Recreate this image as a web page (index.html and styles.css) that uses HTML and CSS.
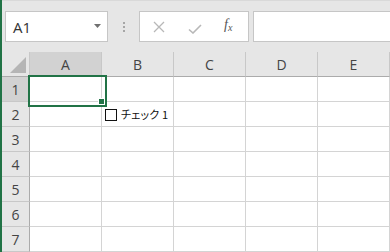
FILE: index.html
```html
<!DOCTYPE html>
<html lang="ja">
<head>
<meta charset="utf-8">
<link rel="stylesheet" href="styles.css">
</head>
<body>
<div class="app">
  <div class="toolbar">
    <div class="namebox">
      <span class="name">A1</span>
      <svg class="drop" width="7" height="4" viewBox="0 0 7 4"><path d="M0 0H7L3.5 4Z" fill="#707070"/></svg>
    </div>
    <div class="grip"><i></i><i></i><i></i></div>
    <div class="fbtns">
      <svg class="ico" width="12" height="12" viewBox="0 0 12 12"><path d="M1 1L11 11M11 1L1 11" stroke="#b8b8b8" stroke-width="1.3" fill="none"/></svg>
      <svg class="ico" width="14" height="10" viewBox="0 0 14 10"><path d="M1 5.5L5 9L13 1" stroke="#b8b8b8" stroke-width="1.6" fill="none"/></svg>
      <span class="fx">f<sub>x</sub></span>
    </div>
    <div class="finput"></div>
  </div>
  <div class="sheet">
    <div class="corner"><svg width="18" height="18" viewBox="0 0 18 18"><path d="M17 1V17H1Z" fill="#b5b5b5"/></svg></div>
    <div class="ch sel">A</div>
    <div class="ch">B</div>
    <div class="ch">C</div>
    <div class="ch">D</div>
    <div class="ch">E</div>

    <div class="rh sel">1</div>
    <div class="c a1"><span class="handle"></span></div><div class="c"></div><div class="c"></div><div class="c"></div><div class="c"></div>

    <div class="rh">2</div>
    <div class="c"></div><div class="c chk"><span class="box"></span><span class="lbl">チェック 1</span></div><div class="c"></div><div class="c"></div><div class="c"></div>

    <div class="rh">3</div>
    <div class="c"></div><div class="c"></div><div class="c"></div><div class="c"></div><div class="c"></div>

    <div class="rh">4</div>
    <div class="c"></div><div class="c"></div><div class="c"></div><div class="c"></div><div class="c"></div>

    <div class="rh">5</div>
    <div class="c"></div><div class="c"></div><div class="c"></div><div class="c"></div><div class="c"></div>

    <div class="rh">6</div>
    <div class="c"></div><div class="c"></div><div class="c"></div><div class="c"></div><div class="c"></div>

    <div class="rh">7</div>
    <div class="c"></div><div class="c"></div><div class="c"></div><div class="c"></div><div class="c"></div>
  </div>
</div>
</body>
</html>
```
FILE: styles.css
```css
* { box-sizing: border-box; }
html, body { margin: 0; padding: 0; }
body {
  width: 390px;
  height: 252px;
  overflow: hidden;
  background: #fff;
  font-family: "Open Sans", "Noto Sans", "Noto Sans CJK JP", sans-serif;
}
.app {
  border-left: 2px solid #217346;
  height: 252px;
  overflow: hidden;
}
.toolbar {
  height: 52px;
  background: #e6e6e6;
  border-top: 1px solid #d9d9d9;
  display: flex;
  align-items: flex-start;
  padding: 10px 0 0 3px;
}
.namebox {
  width: 103px;
  height: 31px;
  background: #fff;
  border: 1px solid #c6c6c6;
  display: flex;
  align-items: center;
  justify-content: space-between;
  padding: 0 6px 0 7px;
}
.name {
  font-size: 15px;
  color: #333;
  line-height: 1;
  margin-top: 1px;
}
.drop { margin-top: -2px; }
.grip {
  width: 31px;
  height: 31px;
  display: flex;
  flex-direction: column;
  align-items: center;
  justify-content: center;
  gap: 2px;
}
.grip i {
  display: block;
  width: 2px;
  height: 2px;
  background: #a6a6a6;
}
.fbtns {
  width: 110px;
  height: 31px;
  background: #fff;
  border: 1px solid #c6c6c6;
  display: flex;
  align-items: center;
  padding-left: 13px;
  gap: 0;
}
.fbtns .ico:nth-child(1) { margin-right: 23px; }
.fbtns .ico:nth-child(2) { margin-top: 4px; margin-right: 22px; }
.fx {
  font-family: "Liberation Serif", "DejaVu Serif", serif;
  font-style: italic;
  font-size: 14px;
  color: #555;
  line-height: 1;
  margin-top: -2px;
}
.fx sub {
  font-size: 10px;
  vertical-align: -2px;
}
.finput {
  flex: 1;
  height: 31px;
  margin-left: 4px;
  margin-right: -2px;
  background: #fff;
  border: 1px solid #c6c6c6;
}
.sheet {
  display: grid;
  grid-template-columns: 28px repeat(5, 72px);
  grid-template-rows: repeat(8, 25px);
}
.corner, .ch, .rh {
  background: #e6e6e6;
  color: #444;
  font-size: 14px;
  display: flex;
  align-items: center;
  justify-content: center;
}
.corner {
  border-right: 1px solid #c8c8c8;
  border-bottom: 1px solid #ababab;
  align-items: flex-end;
  justify-content: flex-end;
  padding: 0 2px 2px 0;
}
.ch {
  border-right: 1px solid #c8c8c8;
  border-bottom: 1px solid #ababab;
  padding-top: 1px;
}
.rh {
  border-right: 1px solid #ababab;
  border-bottom: 1px solid #c8c8c8;
}
.ch.sel, .rh.sel { background: #d2d2d2; }
.c {
  border-right: 1px solid #d4d4d4;
  border-bottom: 1px solid #d4d4d4;
}
.a1 { position: relative; }
.a1::after {
  content: "";
  position: absolute;
  left: -2px;
  top: -2px;
  width: 75px;
  height: 28px;
  border: 2px solid #217346;
}
.handle {
  position: absolute;
  left: 68px;
  top: 21px;
  width: 7px;
  height: 7px;
  background: #217346;
  border: 1px solid #fff;
  z-index: 2;
}
.chk {
  display: flex;
  align-items: center;
  padding-left: 3px;
}
.box {
  width: 12px;
  height: 12px;
  border: 1px solid #111;
  background: #fff;
  margin-right: 4px;
  margin-top: 1px;
}
.lbl {
  font-family: "Noto Sans CJK JP", sans-serif;
  font-feature-settings: "palt";
  font-size: 11px;
  color: #111;
  white-space: nowrap;
  letter-spacing: 0.2px;
}
```
